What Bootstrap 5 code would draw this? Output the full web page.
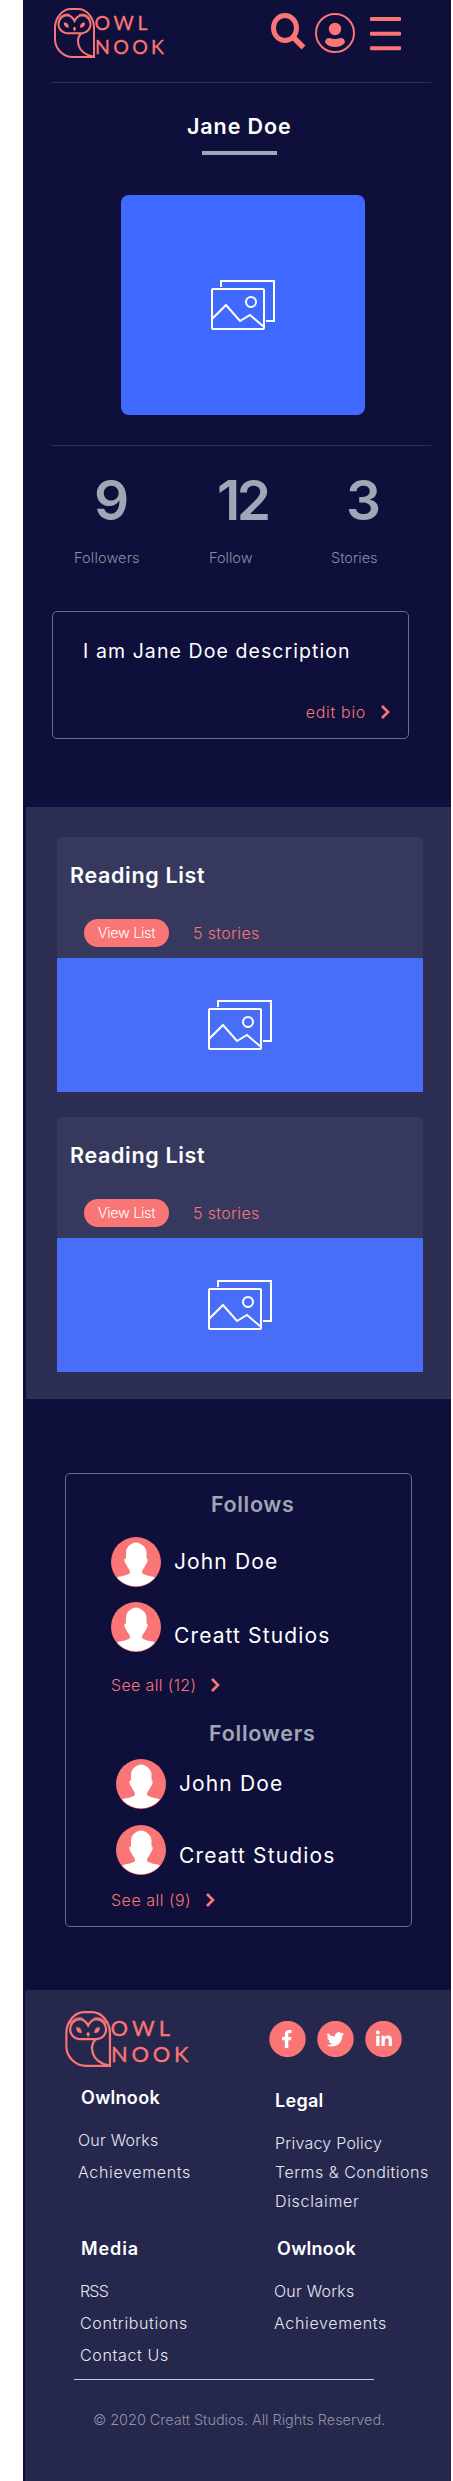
<!DOCTYPE html>
<html lang="en">
<head>
<meta charset="utf-8">
<meta name="viewport" content="width=device-width, initial-scale=1">
<title>Owlnook – Jane Doe</title>
<link href="https://cdn.jsdelivr.net/npm/bootstrap@5.3.0/dist/css/bootstrap.min.css" rel="stylesheet">
<style>
:root{--navy:#0e0f3b;--coral:#fa7575;--mist:#a1a6b4}
body{font-family:Inter,"Liberation Sans",sans-serif;font-size:16px;line-height:24px;font-weight:300;background:#fff;color:#fff}
.page{width:428px;margin-left:23px;background:var(--navy)}
svg{display:block;flex:none}
a{color:inherit;text-decoration:none}
.coral{color:var(--coral)}
.mist{color:var(--mist)}
.topbar{height:82px;padding:8px 50px 0 31px}
.logo-text{font-family:Lato,sans-serif;font-size:19.5px;font-weight:400;fill:#fa7575;stroke:#fa7575;stroke-width:.3}
.rule{width:380px;height:1px;margin-left:28px;background:#2c2e54}
.title{font-size:21.5px;line-height:24px;font-weight:600;margin:0;white-space:nowrap}
.name{margin:31px 0 13px 164px;letter-spacing:.9px}
.name-bar{width:75px;height:4px;margin-left:179px;background:var(--mist)}
.portrait{width:244px;height:220px;margin:40px 0 30px 98px;border-radius:8px;background:#3f69ff}
.stats{display:grid;grid-template-columns:135px 122px 1fr;padding:24px 0 0 51px;color:var(--mist)}
.stat-num{font-size:55px;line-height:60px;font-weight:600;margin-bottom:16px}
.stat-label{font-size:14.5px;color:#8b90a4}
.outline{border:1px solid #6b6d86;border-radius:5px}
.bio{width:357px;height:128px;margin:41px 0 68px 29px;padding:27px 18px 0 30px}
.bio p{font-size:19.5px;font-weight:400;letter-spacing:1.08px;margin:0 0 37px;white-space:nowrap}
.lists{margin-left:3px;height:592px;padding:30px 28px 0 31px;gap:25px;background:#2c2e54}
.list-card{border-radius:5px 5px 0 0;background:#36395d}
.list-head{height:121px;padding:26px 0 0 13px}
.list-head .title{letter-spacing:.67px}
.pill{width:85px;height:28px;border-radius:14px;background:var(--coral);font-size:14.5px;line-height:27px;letter-spacing:-.35px;text-align:center;color:#fff}
.list-img{height:134px;background:#486ef7}
.people{width:347px;height:454px;margin:74px 0 63px 42px;padding:18px 0 0 45px}
.person{height:50px;gap:13px;font-size:21px;font-weight:400;letter-spacing:1.12px}
.see{letter-spacing:.35px;gap:15px}
footer{margin-left:2px;height:491px;padding-top:21px;background:#26274d}
.social{gap:11px;padding-top:10px}
.links{height:151px}
.links>div{flex:none;width:194px;white-space:nowrap}
.links h3{font-size:18px;line-height:24px;font-weight:600;margin:0 0 14px;letter-spacing:.3px}
.links a{display:block;line-height:32px;color:#e6e6ee}
.tight a{line-height:29px}
.copy{font-size:14.5px;letter-spacing:-.04px;color:#9194a6;margin:28px 0 0 68px;white-space:nowrap}
</style>
</head>
<body>
<svg width="0" height="0" class="position-absolute">
  <symbol id="owl" viewBox="0 0 42 50">
    <g fill="none" stroke="#fa7575" stroke-width="2">
      <path d="M40 49H19A18 18 0 0 1 1 31V20C1 9 9 1 17 1H24C32 1 40 9 40 20Z"/>
      <path d="M20.500 13C18.500 9 15.500 7.300 12.500 7.300A9 9 0 0 0 12.500 25.200H28.500A9 9 0 0 0 28.500 7.300C25.500 7.300 22.500 9 20.500 13Z"/>
      <path d="M27 25.500C22 31 22 45 39 48.500"/>
      <path d="M4.500 11Q9 4.500 16 6.500M36.500 11Q32 4.500 25 6.500" stroke-width="1"/>
    </g>
    <g fill="#fa7575">
      <path d="M9.800 14.500Q14.800 14 14.800 19.600Q9.800 20 9.800 14.500ZM31 14.500Q26 14 26 19.600Q31 20 31 14.500Z"/>
      <path d="M20.500 18.500L22.200 20.500L20.500 23.500L18.800 20.500Z"/>
    </g>
  </symbol>
  <symbol id="pictures" viewBox="0 0 64 50">
    <g fill="none" stroke="#fff" stroke-width="2">
      <path d="M10 7V1H63V41H55"/>
      <rect x="1" y="9" width="52" height="40" rx="1"/>
      <circle cx="40" cy="22" r="5"/>
      <path d="M1.500 38.500L15 25L29 41L39 35L53 47"/>
    </g>
  </symbol>
  <symbol id="avatar" viewBox="0 0 50 50">
    <circle cx="25" cy="25" r="25" fill="#fa7575"/>
    <path fill="#fff" d="M25 5.500C20 6 15 10 15 15.500V21.500C13 21.500 13 23.500 14 25.500C15 28 16 28.500 17 31C19 33 20 36 17.500 37C14 39 9 39 6 40.500A25 25 0 0 0 44 40.500C41 39 36 39 32.500 37C30 36 31 33 33 31C34 28.500 35 28 36 25.500C37 23.500 37 21.500 35.500 21.500V15.500C35.500 10 30 6 25 5.500Z"/>
  </symbol>
  <symbol id="chev" viewBox="0 0 9 14"><path d="M1 1L7 7L1 13" fill="none" stroke="#fa7575" stroke-width="2.700"/></symbol>
</svg>

<main class="page">
  <header class="topbar d-flex justify-content-between align-items-start">
    <svg width="114" height="50" viewBox="0 0 114 50"><use href="#owl" width="42" height="50"/><g class="logo-text"><text x="40.500" y="22" textLength="53">OWL</text><text x="41" y="45.500" textLength="69">NOOK</text></g></svg>
    <nav class="d-flex align-items-start">
      <svg width="36" height="38" style="margin-top:5px" viewBox="0 0 36 38" fill="none" stroke="#fa7575"><ellipse cx="14" cy="15" rx="11.500" ry="12.500" stroke-width="5"/><path d="M23 25L32.500 34.500" stroke-width="5.500"/></svg>
      <svg width="40" height="40" class="ms-2" style="margin-top:5px" viewBox="0 0 40 40"><circle cx="20" cy="20" r="19" fill="none" stroke="#fa7575" stroke-width="2"/><circle cx="20" cy="16" r="6.200" fill="#fa7575"/><path fill="#fa7575" d="M14.500 25Q20 27 25.500 25C28.500 25 30 27 30 29.500C28 32.500 24 34 20 34S12 32.500 10 29.500C10 27 11.500 25 14.500 25Z"/></svg>
      <svg width="31" height="34" style="margin:9px 0 0 15px" viewBox="0 0 31 34" fill="#fa7575"><rect width="31" height="4" rx="1"/><rect y="14.700" width="31" height="4" rx="1"/><rect y="29.300" width="31" height="4" rx="1"/></svg>
    </nav>
  </header>
  <div class="rule"></div>
  <h1 class="title name">Jane Doe</h1>
  <div class="name-bar"></div>
  <div class="portrait d-flex align-items-center justify-content-center"><svg width="64" height="50"><use href="#pictures"/></svg></div>
  <div class="rule"></div>

  <section class="stats">
    <div><div class="stat-num" style="padding-left:20px">9</div><div class="stat-label" style="letter-spacing:.15px">Followers</div></div>
    <div><div class="stat-num" style="padding-left:8px;letter-spacing:-3.500px">12</div><div class="stat-label">Follow</div></div>
    <div><div class="stat-num" style="padding-left:15px">3</div><div class="stat-label">Stories</div></div>
  </section>

  <section class="bio outline">
    <p>I am Jane Doe description</p>
    <a href="#" class="coral d-flex align-items-center justify-content-end"><span style="letter-spacing:.67px;margin-right:15px">edit bio</span><svg width="9" height="14"><use href="#chev"/></svg></a>
  </section>

  <section class="lists d-flex flex-column">
    <article class="list-card">
      <div class="list-head"><h2 class="title">Reading List</h2>
        <div class="d-flex align-items-center" style="padding:32px 0 0 14px"><a href="#" class="pill">View List</a><span class="coral" style="margin-left:24px;letter-spacing:.34px">5 stories</span></div></div>
      <div class="list-img d-flex align-items-center justify-content-center"><svg width="64" height="50"><use href="#pictures"/></svg></div>
    </article>
    <article class="list-card">
      <div class="list-head"><h2 class="title">Reading List</h2>
        <div class="d-flex align-items-center" style="padding:32px 0 0 14px"><a href="#" class="pill">View List</a><span class="coral" style="margin-left:24px;letter-spacing:.34px">5 stories</span></div></div>
      <div class="list-img d-flex align-items-center justify-content-center"><svg width="64" height="50"><use href="#pictures"/></svg></div>
    </article>
  </section>

  <section class="people outline">
    <h2 class="title mist" style="margin:0 0 21px 100px;letter-spacing:.65px">Follows</h2>
    <div class="person d-flex"><svg width="50" height="50"><use href="#avatar"/></svg><span style="padding-top:13px">John Doe</span></div>
    <div class="person d-flex" style="margin-top:15px"><svg width="50" height="50"><use href="#avatar"/></svg><span style="padding-top:22px">Creatt Studios</span></div>
    <a href="#" class="see coral d-flex align-items-center" style="margin-top:21px">See all (12)<svg width="9" height="14"><use href="#chev"/></svg></a>
    <h2 class="title mist" style="margin:24px 0 14px 98px;letter-spacing:.75px">Followers</h2>
    <div class="person d-flex" style="margin-left:5px"><svg width="50" height="50"><use href="#avatar"/></svg><span style="padding-top:13px">John Doe</span></div>
    <div class="person d-flex" style="margin:16px 0 0 5px"><svg width="50" height="50"><use href="#avatar"/></svg><span style="padding-top:19px">Creatt Studios</span></div>
    <a href="#" class="see coral d-flex align-items-center" style="margin-top:13px;letter-spacing:.5px">See all (9)<svg width="9" height="14"><use href="#chev"/></svg></a>
  </section>

  <footer>
    <div class="d-flex justify-content-between align-items-start" style="height:75px;padding:0 49px 0 40px">
      <svg width="128" height="56" viewBox="0 0 114 50"><use href="#owl" width="42" height="50"/><g class="logo-text"><text x="40.500" y="22" textLength="53">OWL</text><text x="41" y="45.500" textLength="69">NOOK</text></g></svg>
      <div class="social d-flex">
        <svg width="37" height="37" viewBox="0 0 37 37"><circle cx="18.500" cy="18" r="18.200" fill="#fa7575"/><path fill="#fff" d="M15.800 27V19.300H13V16H15.800V13.500C15.800 10.600 17.500 9 20.200 9C21.500 9 22.500 9.200 22.500 9.200V12H21C19.700 12 19.300 12.800 19.300 13.700V16H22.500L22 19.300H19.300V27Z"/></svg>
        <svg width="37" height="37" viewBox="0 0 37 37"><circle cx="18.500" cy="18" r="18.200" fill="#fa7575"/><path fill="#fff" transform="translate(10 9)" d="M5 16.500c6.600 0 10.200-5.500 10.200-10.200v-.4A7.300 7.300 0 0 0 17 3.800a7 7 0 0 1-2.100.6 3.600 3.600 0 0 0 1.600-2 7 7 0 0 1-2.300.9A3.600 3.600 0 0 0 8.100 6.600 10.200 10.200 0 0 1 .9 2.900a3.600 3.600 0 0 0 1.100 4.800A3.500 3.500 0 0 1 .4 7.300a3.600 3.600 0 0 0 2.900 3.500 3.500 3.500 0 0 1-1.700.1 3.600 3.600 0 0 0 3.400 2.500A7.300 7.300 0 0 1-.3 14.900 10.200 10.200 0 0 0 5 16.500"/></svg>
        <svg width="37" height="37" viewBox="0 0 37 37"><circle cx="18.500" cy="18" r="18.200" fill="#fa7575"/><g fill="#fff"><circle cx="12.800" cy="11.500" r="2"/><path d="M11.200 14.800H14.500V25H11.200ZM16.500 14.800H19.600V16.200C20.200 15.200 21.400 14.500 22.900 14.500C26 14.500 27 16.500 27 19.400V25H23.700V20C23.700 18.500 23.400 17.300 21.900 17.300C20.300 17.300 19.800 18.500 19.800 20V25H16.500Z"/></g></svg>
      </div>
    </div>
    <div class="links d-flex" style="padding-left:53px">
      <div><h3 style="margin-left:3px">Owlnook</h3><a href="#" style="letter-spacing:.21px">Our Works</a><a href="#" style="letter-spacing:.65px">Achievements</a></div>
      <div class="tight" style="padding:3px 0 0 3px"><h3 style="margin-bottom:16px">Legal</h3><a href="#" style="letter-spacing:.24px">Privacy Policy</a><a href="#" style="letter-spacing:.49px">Terms &amp; Conditions</a><a href="#" style="letter-spacing:.67px">Disclaimer</a></div>
    </div>
    <div class="links d-flex" style="padding-left:55px;height:142px">
      <div><h3 style="margin-left:1px;letter-spacing:.9px">Media</h3><a href="#" style="letter-spacing:-.8px">RSS</a><a href="#" style="letter-spacing:.63px">Contributions</a><a href="#" style="letter-spacing:.64px">Contact Us</a></div>
      <div><h3 style="margin-left:3px">Owlnook</h3><a href="#" style="letter-spacing:.21px">Our Works</a><a href="#" style="letter-spacing:.65px">Achievements</a></div>
    </div>
    <div style="width:300px;height:1px;margin:0 0 0 49px;background:#c9c8fb"></div>
    <p class="copy">© 2020 Creatt Studios. All Rights Reserved.</p>
  </footer>
</main>
<script src="https://cdn.jsdelivr.net/npm/bootstrap@5.3.0/dist/js/bootstrap.bundle.min.js"></script>
</body>
</html>
